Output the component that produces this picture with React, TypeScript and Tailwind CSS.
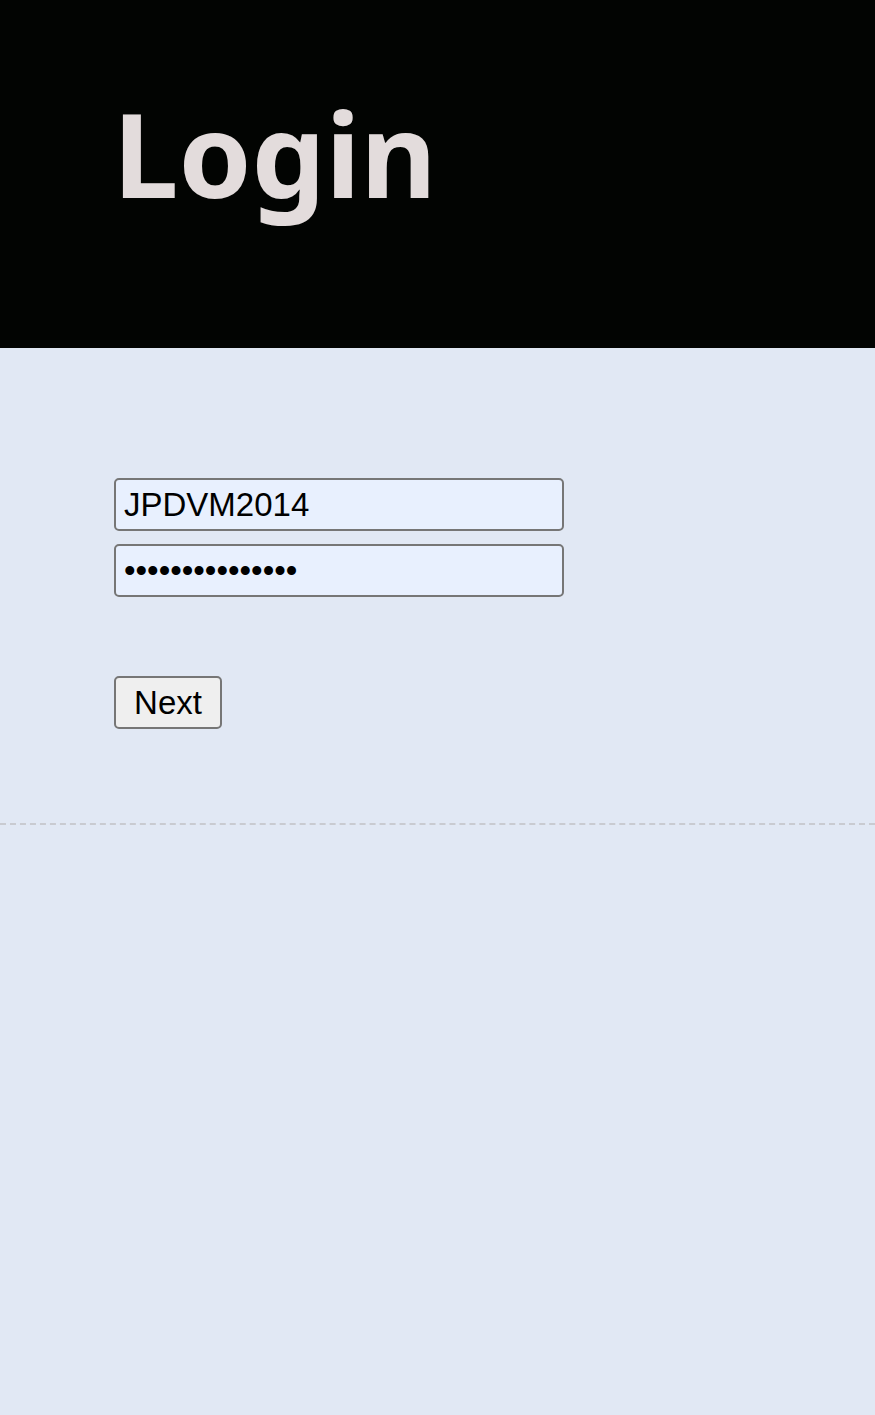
import React, { useState } from 'react';

const App = (): React.ReactElement => {
  const [username, setUsername] = useState('JPDVM2014');
  const [password, setPassword] = useState('abcdefghijklmno');

  return (
    <div className="min-h-[1415px] bg-[#e1e8f4]">
      {/* Header */}
      <div className="h-[348px] bg-[#020402] pl-[113px] pt-[77px]">
        <h1
          className="text-[117px] font-bold leading-[1.3] text-[#e3dcdc]"
          style={{ fontFamily: '"Noto Sans", "Open Sans", sans-serif' }}
        >
          Login
        </h1>
      </div>

      {/* Form */}
      <div
        className="px-[114px] pt-[130px] pb-[94px]"
        style={{ fontFamily: '"Liberation Sans", Arial, sans-serif' }}
      >
        <div className="flex flex-col gap-[13px] w-[450px]">
          <input
            type="text"
            value={username}
            onChange={(e) => setUsername(e.target.value)}
            className="h-[53px] w-full rounded-[5px] border-2 border-[#767676] bg-[#e8f0fe] px-[8px] text-[33px] text-black outline-none"
          />
          <input
            type="password"
            value={password}
            onChange={(e) => setPassword(e.target.value)}
            className="h-[53px] w-full rounded-[5px] border-2 border-[#767676] bg-[#e8f0fe] px-[8px] text-[33px] text-black outline-none"
          />
        </div>
        <button className="mt-[79px] h-[53px] w-[108px] rounded-[5px] border-2 border-[#767676] bg-[#efefef] text-[33px] text-black">
          Next
        </button>
      </div>

      <div className="border-t-2 border-dashed border-[#c9cbd1]"></div>
    </div>
  );
};

export default App;
